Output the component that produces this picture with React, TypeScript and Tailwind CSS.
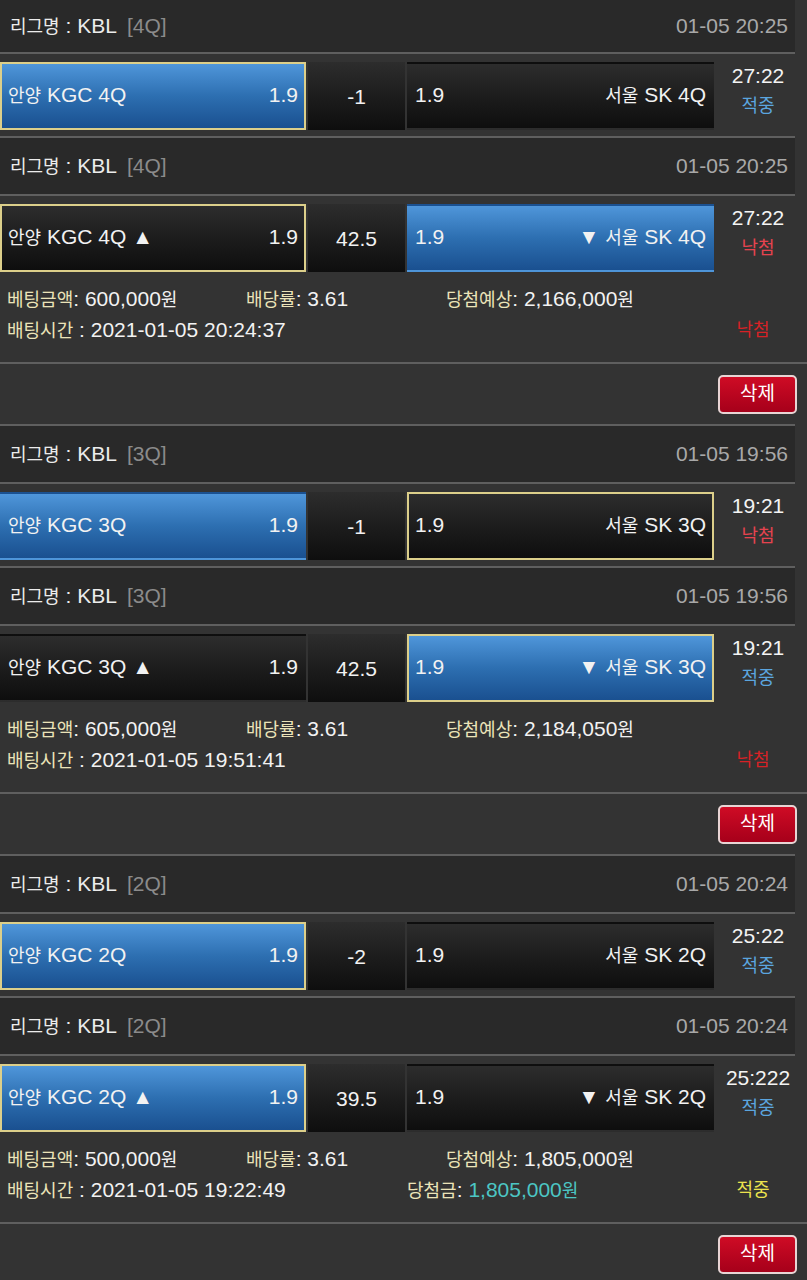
import React from 'react';

type Side = 'home' | 'away';

type Game = {
  q: string;
  time: string;
  home: string;
  away: string;
  mid: string;
  win: Side;
  pick: Side;
  score: string;
  result: '적중' | '낙첨';
};

type Slip = {
  games: Game[];
  amount: string;
  rate: string;
  expect: string;
  betTime: string;
  prize?: string;
  status: '적중' | '낙첨';
};

const slips: Slip[] = [
  {
    games: [
      { q: '4Q', time: '01-05 20:25', home: '안양 KGC 4Q', away: '서울 SK 4Q', mid: '-1', win: 'home', pick: 'home', score: '27:22', result: '적중' },
      { q: '4Q', time: '01-05 20:25', home: '안양 KGC 4Q ▲', away: '▼ 서울 SK 4Q', mid: '42.5', win: 'away', pick: 'home', score: '27:22', result: '낙첨' },
    ],
    amount: '600,000원',
    rate: '3.61',
    expect: '2,166,000원',
    betTime: '2021-01-05 20:24:37',
    status: '낙첨',
  },
  {
    games: [
      { q: '3Q', time: '01-05 19:56', home: '안양 KGC 3Q', away: '서울 SK 3Q', mid: '-1', win: 'home', pick: 'away', score: '19:21', result: '낙첨' },
      { q: '3Q', time: '01-05 19:56', home: '안양 KGC 3Q ▲', away: '▼ 서울 SK 3Q', mid: '42.5', win: 'away', pick: 'away', score: '19:21', result: '적중' },
    ],
    amount: '605,000원',
    rate: '3.61',
    expect: '2,184,050원',
    betTime: '2021-01-05 19:51:41',
    status: '낙첨',
  },
  {
    games: [
      { q: '2Q', time: '01-05 20:24', home: '안양 KGC 2Q', away: '서울 SK 2Q', mid: '-2', win: 'home', pick: 'home', score: '25:22', result: '적중' },
      { q: '2Q', time: '01-05 20:24', home: '안양 KGC 2Q ▲', away: '▼ 서울 SK 2Q', mid: '39.5', win: 'home', pick: 'home', score: '25:222', result: '적중' },
    ],
    amount: '500,000원',
    rate: '3.61',
    expect: '1,805,000원',
    betTime: '2021-01-05 19:22:49',
    prize: '1,805,000원',
    status: '적중',
  },
];

// hangul runs render a bit smaller than the latin text in the original
const Txt = ({ s }: { s: string }) => (
  <>
    {s.split(/([가-힣]+)/).map((p, i) =>
      /[가-힣]/.test(p) ? (
        <span key={i} className="text-[18px]">
          {p}
        </span>
      ) : (
        p
      )
    )}
  </>
);

const LeagueHeader = ({ q, time, first }: { q: string; time: string; first: boolean }) => (
  <div
    className={
      first
        ? 'flex h-[54px] w-[795px] items-center justify-between border-b-2 border-[#5f5f5f] bg-[#292929] pl-[10px] pr-[7px]'
        : 'flex h-[60px] w-[795px] items-center justify-between border-y-2 border-[#5f5f5f] bg-[#292929] pl-[10px] pr-[7px]'
    }
  >
    <div>
      <span className="text-[#ececec]">
        <Txt s="리그명 : KBL" />
      </span>
      <span className="ml-[10px] text-[#8b8b8b]">[{q}]</span>
    </div>
    <span className="text-[#a8a8a8]">{time}</span>
  </div>
);

const TeamBox = ({ name, win, pick, right }: { name: string; win: boolean; pick: boolean; right?: boolean }) => (
  <div
    className={`flex h-[68px] items-center justify-between border-2 px-[6px] pb-[2px] ${right ? 'w-[307px]' : 'w-[306px]'} ${
      win ? 'bg-linear-to-b from-[#4f96da] via-[#2d6fb1] to-[#1a5090]' : 'bg-linear-to-b from-[#2d2d2d] to-[#0e0e0e]'
    } ${pick ? 'border-[#dccf8a]' : 'border-transparent'}`}
  >
    {right ? (
      <>
        <span>1.9</span>
        <span>
          <Txt s={name} />
        </span>
      </>
    ) : (
      <>
        <span>
          <Txt s={name} />
        </span>
        <span>1.9</span>
      </>
    )}
  </div>
);

const GameRow = ({ g }: { g: Game }) => (
  <div className="flex h-[82px] gap-[2px] pt-[8px] text-[#f2f2f2]">
    <TeamBox name={g.home} win={g.win === 'home'} pick={g.pick === 'home'} />
    <div className="flex h-[68px] w-[97px] items-center justify-center bg-linear-to-b from-[#2d2d2d] to-[#0e0e0e] pt-[2px]">
      {g.mid}
    </div>
    <TeamBox name={g.away} win={g.win === 'away'} pick={g.pick === 'away'} right />
    <div className="-mt-[2px] flex w-[84px] flex-col items-center leading-[31px]">
      <span className="text-[#f4f4f4]">{g.score}</span>
      <span className={g.result === '적중' ? 'text-[18px] text-[#5ba5df]' : 'text-[18px] text-[#e6434f]'}>{g.result}</span>
    </div>
  </div>
);

const Label = ({ s }: { s: string }) => <span className="text-[18px] text-[#ebe4b9]">{s}</span>;

const SlipInfo = ({ s }: { s: Slip }) => (
  <div className="h-[86px] border-b-2 border-[#5f5f5f] px-[7px] pt-[6px] leading-[30px] text-[#f2f2f2]">
    <div className="flex">
      <span className="w-[239px]">
        <Label s="베팅금액" />: <Txt s={s.amount} />
      </span>
      <span className="w-[200px]">
        <Label s="배당률" />: {s.rate}
      </span>
      <span>
        <Label s="당첨예상" />: <Txt s={s.expect} />
      </span>
    </div>
    <div className="flex">
      <span className="w-[400px]">
        <Label s="배팅시간" /> : {s.betTime}
      </span>
      <span className="flex-1">
        {s.prize && (
          <>
            <Label s="당첨금" />:{' '}
            <span className="text-[#4cc6c4]">
              <Txt s={s.prize} />
            </span>
          </>
        )}
      </span>
      <span
        className={
          s.status === '적중'
            ? 'w-[94px] text-center text-[18px] text-[#ece24e]'
            : 'w-[94px] text-center text-[18px] text-[#d62226]'
        }
      >
        {s.status}
      </span>
    </div>
  </div>
);

export default function App() {
  return (
    <div className="min-h-screen w-full overflow-hidden bg-[#333333] font-['Liberation_Sans','Noto_Sans_CJK_KR',sans-serif] text-[21px]">
      {slips.map((s, i) => (
        <div key={i}>
          {s.games.map((g, j) => (
            <div key={j}>
              <LeagueHeader q={g.q} time={g.time} first={i === 0 && j === 0} />
              <GameRow g={g} />
            </div>
          ))}
          <SlipInfo s={s} />
          <div className="flex h-[60px] items-center justify-end pr-[10px]">
            <button className="h-[39px] w-[79px] rounded-[5px] border-2 border-[#e8d4d4] bg-linear-to-b from-[#cf0c25] to-[#a6001a] text-[19px] text-white">
              삭제
            </button>
          </div>
        </div>
      ))}
    </div>
  );
}
